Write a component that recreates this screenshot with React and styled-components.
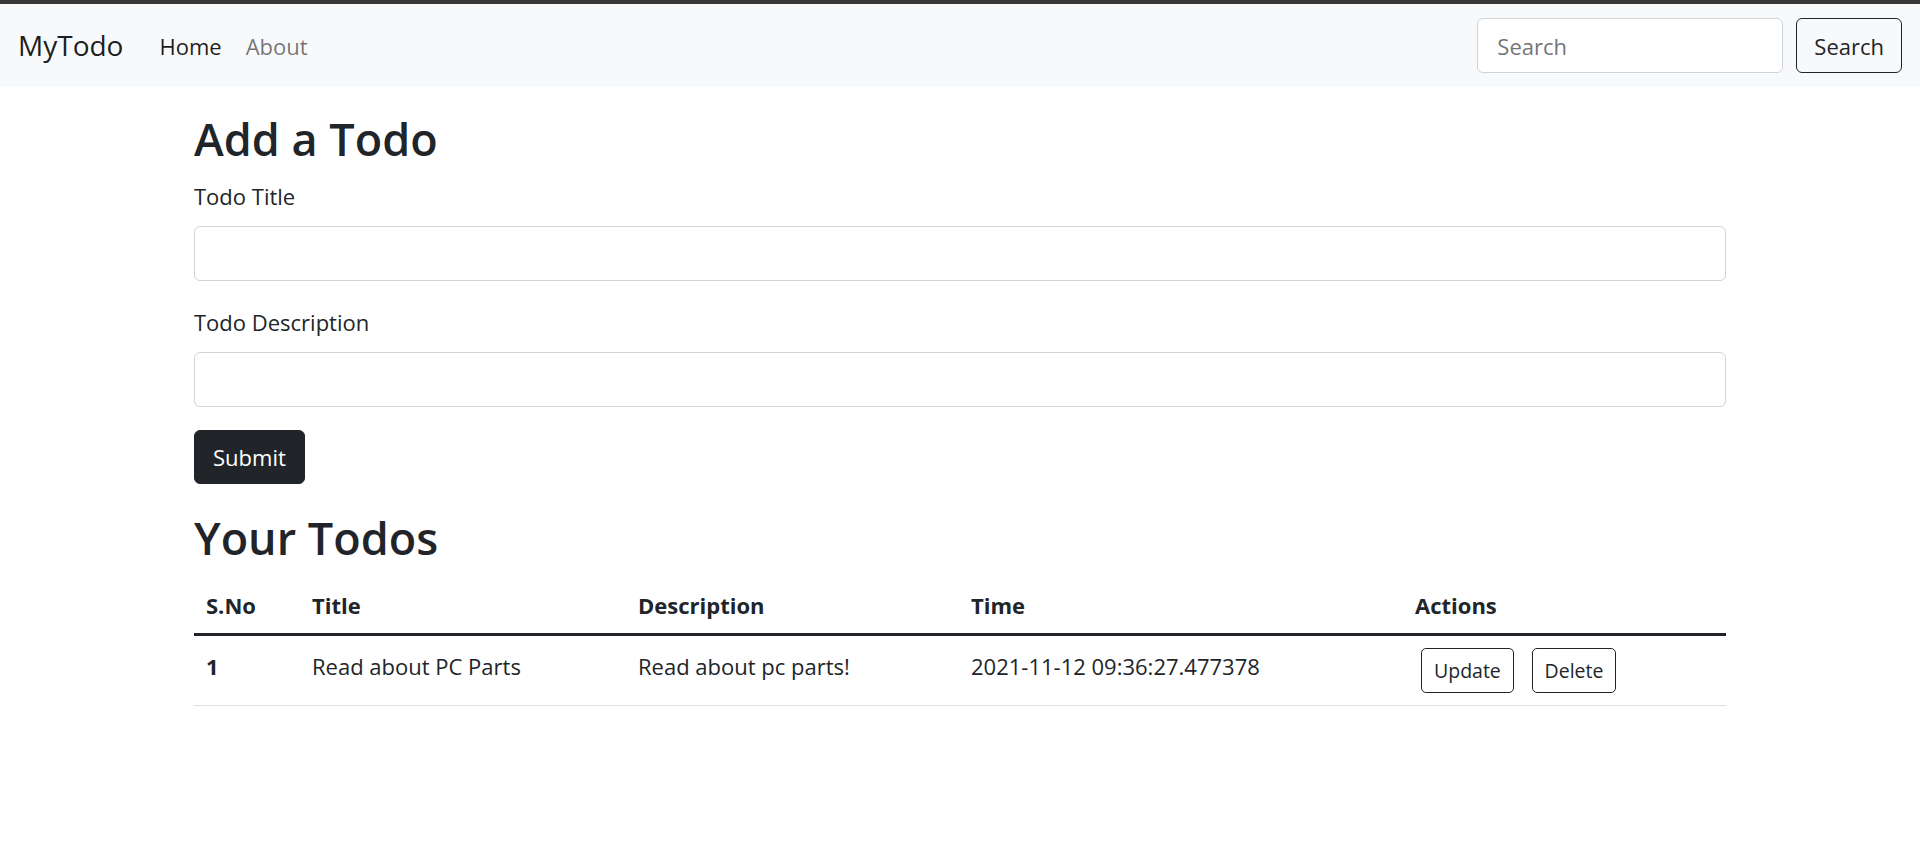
import React from "react"
import styled, { createGlobalStyle } from "styled-components"

const todos = [
  {
    sno: 1,
    title: "Read about PC Parts",
    desc: "Read about pc parts!",
    time: "2021-11-12 09:36:27.477378",
  },
]

const App = () => {
  return (
    <>
      <GlobalStyle />
      <Navbar>
        <Brand>MyTodo</Brand>
        <NavLinks>
          <NavLink $active>Home</NavLink>
          <NavLink>About</NavLink>
        </NavLinks>
        <SearchForm>
          <SearchInput placeholder="Search" />
          <OutlineButton>Search</OutlineButton>
        </SearchForm>
      </Navbar>

      <Container>
        <Heading>Add a Todo</Heading>
        <Field>
          <Label>Todo Title</Label>
          <TextInput />
        </Field>
        <Field>
          <Label>Todo Description</Label>
          <TextInput />
        </Field>
        <SubmitButton>Submit</SubmitButton>

        <Heading $spaced>Your Todos</Heading>
        <Table>
          <thead>
            <tr>
              <HeadCell $w={106}>S.No</HeadCell>
              <HeadCell $w={326}>Title</HeadCell>
              <HeadCell $w={333}>Description</HeadCell>
              <HeadCell $w={444}>Time</HeadCell>
              <HeadCell>Actions</HeadCell>
            </tr>
          </thead>
          <tbody>
            {todos.map(todo => (
              <tr key={todo.sno}>
                <RowHead>{todo.sno}</RowHead>
                <Cell>{todo.title}</Cell>
                <Cell>{todo.desc}</Cell>
                <Cell>{todo.time}</Cell>
                <Cell>
                  <SmallButton>Update</SmallButton> <SmallButton>Delete</SmallButton>
                </Cell>
              </tr>
            ))}
          </tbody>
        </Table>
      </Container>
    </>
  )
}

export default App

const GlobalStyle = createGlobalStyle`
  body {
    margin: 0;
    background: #fff;
    color: #212529;
    font-family: "Open Sans", "Noto Sans", sans-serif;
    font-size: 22px;
    line-height: 36px;
  }
  * {
    box-sizing: border-box;
  }
`

const Navbar = styled.nav`
  display: flex;
  align-items: center;
  height: 87px;
  border-top: 4px solid #393939;
  background-color: #f8f9fa;
  padding: 0 18px 0 18px;
`

const Brand = styled.a`
  font-size: 28px;
  line-height: 45px;
  color: rgba(0, 0, 0, 0.9);
  margin-right: 24px;
  cursor: pointer;
`

const NavLinks = styled.div`
  display: flex;
  flex: 1;
`

const NavLink = styled.a`
  padding: 0 12px;
  line-height: 36px;
  color: ${props => (props.$active ? "rgba(0, 0, 0, 0.9)" : "rgba(0, 0, 0, 0.55)")};
  cursor: pointer;
`

const SearchForm = styled.form`
  display: flex;
  align-items: center;
  gap: 13px;
`

const SearchInput = styled.input`
  width: 306px;
  height: 55px;
  padding: 0 19px;
  font: inherit;
  color: #212529;
  background: #fff;
  border: 1px solid #ced4da;
  border-radius: 6px;
  outline: none;

  ::placeholder {
    color: #6c757d;
  }
`

const OutlineButton = styled.button`
  height: 55px;
  padding: 0 17px;
  font: inherit;
  color: #212529;
  background: transparent;
  border: 1px solid #212529;
  border-radius: 6px;
  cursor: pointer;
`

const Container = styled.main`
  max-width: 1532px;
  margin: 0 auto;
  padding-top: 23px;
`

const Heading = styled.h2`
  font-size: 45px;
  font-weight: 600;
  line-height: 57.6px;
  margin: ${props => (props.$spaced ? "25px 0 9px" : "0 0 10px")};
`

const Field = styled.div`
  margin-bottom: 23px;
`

const Label = styled.label`
  display: block;
  margin-bottom: 12px;
`

const TextInput = styled.input`
  display: block;
  width: 100%;
  height: 55px;
  padding: 0 18px;
  font: inherit;
  border: 1px solid #ced4da;
  border-radius: 6px;
  outline: none;
`

const SubmitButton = styled.button`
  height: 54px;
  padding: 0 18px;
  font: inherit;
  color: #fff;
  background-color: #212529;
  border: 1px solid #212529;
  border-radius: 6px;
  cursor: pointer;
`

const Table = styled.table`
  width: 100%;
  border-collapse: collapse;
  vertical-align: top;
  text-align: left;
`

const HeadCell = styled.th`
  width: ${props => (props.$w ? `${props.$w}px` : "auto")};
  padding: 12px 12px 10px;
  font-weight: 700;
  border-bottom: 3px solid #212529;
`

const Cell = styled.td`
  padding: 12px;
  border-bottom: 1px solid #dee2e6;
  vertical-align: top;
`

const RowHead = styled(Cell).attrs({ as: "th" })`
  font-weight: 700;
`

const SmallButton = styled.button`
  margin: 0 6px;
  padding: 6px 12px;
  font-family: inherit;
  font-size: 19.5px;
  line-height: 31px;
  color: #212529;
  background: transparent;
  border: 1px solid #212529;
  border-radius: 5px;
  cursor: pointer;
`
